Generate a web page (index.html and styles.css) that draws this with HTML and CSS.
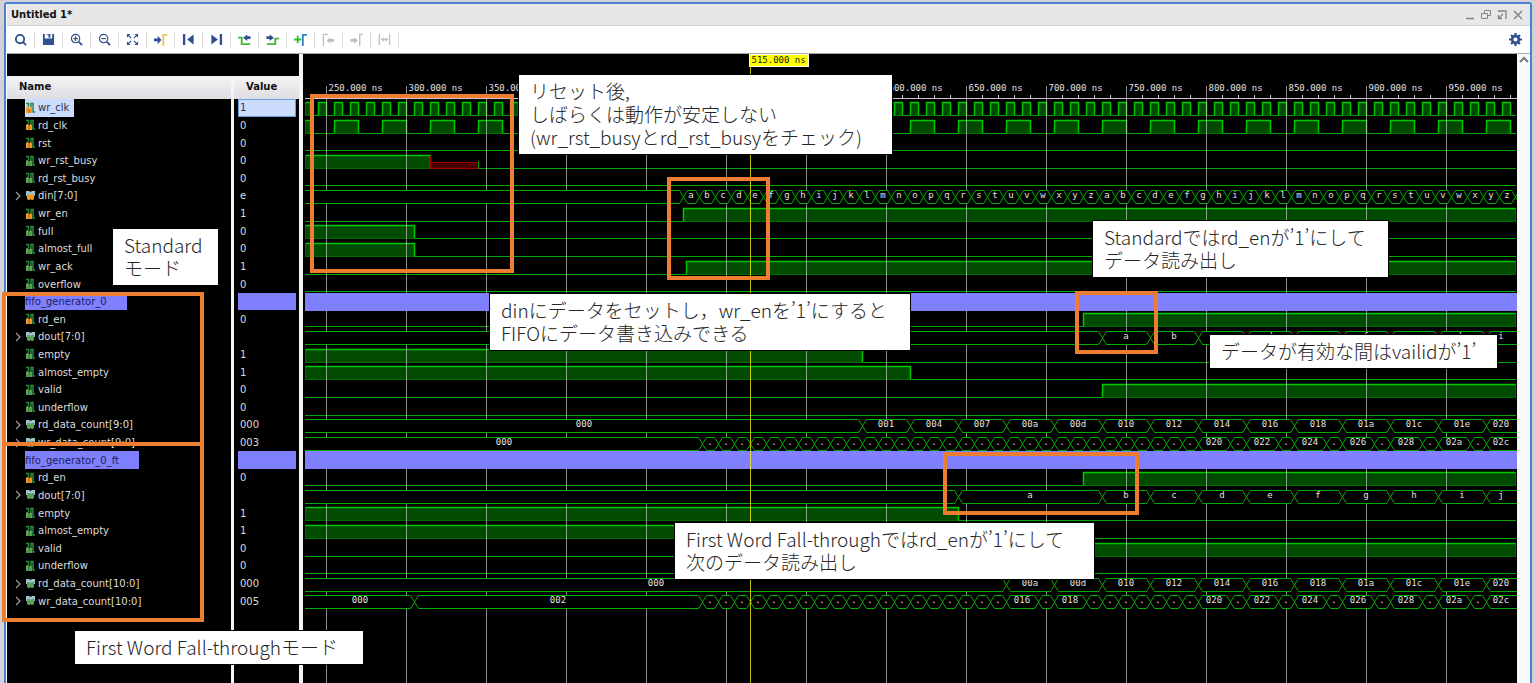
FILE: index.html
```html
<!DOCTYPE html>
<html lang="ja">
<head>
<meta charset="utf-8">
<meta name="viewport" content="width=device-width, initial-scale=1">
<title>Untitled 1*</title>
<link rel="stylesheet" href="styles.css">
</head>
<body>
<svg class="defs" width="0" height="0" aria-hidden="true">
  <symbol id="sig" viewBox="0 0 11 12">
    <path d="M1 1.500h2.500V5M6 5V1.500h2V10h2" fill="none" stroke="#2c8a3c" stroke-width="1.500"/>
    <path class="body" d="M1 6l1-1h1l1.200 1.500L5.500 5H6l1 1v5H1z"/>
    <path d="M4 7v4" stroke="#000" stroke-opacity=".35"/>
  </symbol>
  <symbol id="bus" viewBox="0 0 11 12">
    <path d="M1 1h3l1.500 1L7 1h3v5H1z" fill="#9cc3cf"/>
    <path class="body" d="M2 4h2l1.500 1L7 4h2v4.500L8 10H6.500l-1-1-1 1H3L2 8.500z"/>
  </symbol>
</svg>
<div class="page">
  <div class="window">
    <header class="titlebar">
      <h1>Untitled 1*</h1>
      <div class="controls">
        <button aria-label="Minimize"><svg width="12" height="12"><path d="M2 9.500h8" stroke-width="1.500"/></svg></button>
        <button aria-label="Restore"><svg width="12" height="12"><path d="M4.500 4V1.500h6v5H8M1.500 4.500h6v5h-6z"/></svg></button>
        <button aria-label="Float"><svg width="12" height="12"><path d="M2 2h8v8M2 10l5-5M2.500 6v3.500H6" stroke-width="1.300"/></svg></button>
        <button aria-label="Close"><svg width="12" height="12"><path d="M2 2l8 8M10 2l-8 8" stroke-width="1.500"/></svg></button>
      </div>
    </header>
    <nav class="toolbar" aria-label="Waveform tools">
      <button aria-label="Search"><svg viewBox="0 0 14 14"><circle cx="6.500" cy="6.500" r="4.500" class="n s"/><path d="M10 10l3 3" class="n s"/></svg></button>
      <button aria-label="Save"><svg viewBox="0 0 14 14"><path d="M1 1h2v5h8V1h2v12H1z" class="f"/><path d="M5 1h4v4H7V2H5z" class="f"/></svg></button>
      <button aria-label="Zoom in"><svg viewBox="0 0 14 14"><circle cx="6" cy="6" r="4.500" class="n"/><path d="M9.500 9.500l3.500 3.500" class="n s"/><path d="M3.500 6h5M6 3.500v5" class="n"/></svg></button>
      <button aria-label="Zoom out"><svg viewBox="0 0 14 14"><circle cx="6" cy="6" r="4.500" class="n"/><path d="M9.500 9.500l3.500 3.500" class="n s"/><path d="M3.500 6h5" class="n"/></svg></button>
      <button aria-label="Zoom fit"><svg viewBox="0 0 14 14"><path d="M1 1h4L1 5zM13 1H9l4 4zM1 13h4L1 9zM13 13H9l4-4z" class="f"/><path d="M2 2l3.500 3.500M12 2L8.500 5.500M2 12l3.500-3.500M12 12L8.500 8.500" class="n"/></svg></button>
      <button aria-label="Go to cursor"><svg viewBox="0 0 14 14"><path d="M0 6h4V3l4 4.500L4 12V9H0z" class="f"/><path d="M10 14V2h4" class="y"/></svg></button>
      <button aria-label="Go to start"><svg viewBox="0 0 14 14"><path d="M1 1h2.500v12H1zM12.500 1.500v11L5.500 7z" class="f"/></svg></button>
      <button aria-label="Go to end"><svg viewBox="0 0 14 14"><path d="M10.500 1H13v12h-2.500zM1.500 1.500v11l7-5.500z" class="f"/></svg></button>
      <button aria-label="Previous transition"><svg viewBox="0 0 14 14"><path d="M0 5h4v7h9" class="g"/><path d="M5.500 5L10 1.500V3.500h3.500v3H10v2z" class="f"/></svg></button>
      <button aria-label="Next transition"><svg viewBox="0 0 14 14"><path d="M1 12h9V6h4" class="g"/><path d="M8.500 5L4 1.500V3.500H.5v3H4v2z" class="f"/></svg></button>
      <button aria-label="Add marker"><svg viewBox="0 0 14 14"><path d="M0 7h8M4 3v8" class="g"/><path d="M9.500 14V2H14" class="b"/></svg></button>
      <button aria-label="Previous marker" disabled><svg viewBox="0 0 14 14"><path d="M1.500 14V1.500h5" class="d"/><path d="M5 8l4-3.500v2h4v3H9v2z" class="df"/></svg></button>
      <button aria-label="Next marker" disabled><svg viewBox="0 0 14 14"><path d="M10.500 14V1.500H14" class="d"/><path d="M8.500 8l-4-3.500v2h-4v3h4v2z" class="df"/></svg></button>
      <button aria-label="Swap markers" disabled><svg viewBox="0 0 14 14"><path d="M1.500 1v12M12.500 1v12M4 7h6" class="d"/><path d="M3 7l3-2.500v5zM11 7L8 4.500v5z" class="df"/></svg></button>
      <button class="gear" aria-label="Settings"><svg viewBox="0 0 14 14"><circle cx="7" cy="7" r="3.600" fill="none" stroke="#2f4f8f" stroke-width="2.800"/><path d="M7 0v3M7 11v3M0 7h3M11 7h3M2.200 2.200l2 2M9.800 9.800l2 2M2.200 11.800l2-2M9.800 4.200l2-2" stroke="#2f4f8f" stroke-width="2.400"/></svg></button>
    </nav>
    <main class="viewer">
      <section class="signals">
        <div class="pane names"><h2>Name</h2><ul id="names"></ul></div>
        <div class="pane values"><h2>Value</h2><ul id="values"></ul></div>
      </section>
      <section class="waves"><svg id="waves" role="img" aria-label="Waveforms"></svg></section>
      <div class="scroll"><button aria-label="Scroll up"><svg width="10" height="8"><path d="M1 6l4-4 4 4"/></svg></button></div>
    </main>
  </div>
  <div class="frame f1"></div><div class="frame f2"></div><div class="frame f3"></div>
  <div class="frame f4"></div><div class="frame f5"></div><div class="frame f6"></div>
  <p class="note n1">リセット後,<br>しばらくは動作が安定しない<br>(wr_rst_busyとrd_rst_busyをチェック)</p>
  <p class="note n2">Standard<br>モード</p>
  <p class="note n3">dinにデータをセットし，wr_enを’1’にすると<br>FIFOにデータ書き込みできる</p>
  <p class="note n4">Standardではrd_enが’1’にして<br>データ読み出し</p>
  <p class="note n5">データが有効な間はvailidが’1’</p>
  <p class="note n6">First Word Fall-throughではrd_enが’1’にして<br>次のデータ読み出し</p>
  <p class="note n7">First Word Fall-throughモード</p>
</div>
<script src="script.js"></script>
</body>
</html>
```
FILE: styles.css
```css
* { box-sizing: border-box; }
body { margin: 0; background: #d2d2d4; font-family: "DejaVu Sans", sans-serif; font-size: 10px; color: #111; }
button { border: 0; padding: 0; margin: 0; background: none; display: flex; align-items: center; justify-content: center; }
h1, h2, ul, p { margin: 0; padding: 0; }
.defs { position: absolute; }
.page { position: relative; min-height: 100vh; padding: 2px 4px 0; display: flex; flex-direction: column; overflow: hidden; }
.window { flex: 1; display: flex; flex-direction: column; border: 2px solid #4a80d4; border-bottom: 0; border-radius: 3px 3px 0 0; background: #fff; padding-left: 1px; }

.titlebar { height: 22px; padding: 0 4px; display: flex; align-items: center; justify-content: space-between; background: #e7e7e7; border-bottom: 1px solid #d0d0d0; }
.titlebar h1 { font-size: 10px; line-height: 12px; }
.controls { display: flex; gap: 4px; padding-right: 2px; }
.controls path { fill: none; stroke: #868686; }

.toolbar { height: 28px; display: flex; align-items: center; border-bottom: 1px solid #aaa; }
.toolbar button { width: 28px; height: 16px; border-right: 1px solid #dcdcdc; }
.toolbar svg { width: 13px; height: 13px; }
.toolbar .gear { margin: 0 1px 0 auto; border: 0; }
.f { fill: #2f4f8f; }
.n { fill: none; stroke: #2f4f8f; stroke-width: 1.3; }
.s { stroke-width: 2; }
.y, .g, .b, .d { fill: none; stroke-width: 2; }
.y { stroke: #ebc65a; }
.g { stroke: #3db93d; }
.b { stroke: #2e86c8; }
.d { stroke: #c0c0c0; stroke-width: 1.5; }
.df { fill: #c0c0c0; }

.viewer { flex: 1; display: flex; }
.signals { width: 296px; padding-top: 22px; background: #000; display: flex; border-right: 4px solid #f4f4f4; }
.names { flex: 1; border-right: 3px solid #f4f4f4; }
.values { width: 65px; }
.pane h2 { height: 23px; padding-left: 12px; font-size: 10px; line-height: 22px; background: linear-gradient(#f4f4f6, #dedee2); }
.pane ul { list-style: none; height: 511px; display: grid; grid-template-rows: repeat(29, 1fr); }
.names li { display: flex; align-items: center; padding-left: 5px; color: #dcdcdc; }
.chevron { width: 13px; height: 12px; }
.chevron path { fill: none; stroke: #9a9a9a; stroke-width: 1.2; }
.label { align-self: stretch; display: flex; align-items: center; gap: 2px; padding-right: 5px; }
.label svg { width: 11px; height: 12px; fill: #5aa356; }
.label .in { fill: #f09a28; }
.values li { display: flex; align-items: center; margin: 0 3px 0 4px; padding-left: 2px; color: #dcdcdc; }
.selected .label, .values .selected { background: #cbdcfd; color: #30304a; }
.values .selected { border: 1px solid #6aa0d8; padding-left: 1px; }
.group .label, .values .group { background: #8080ff; color: #20205c; }
.names .group .label { padding-right: 20px; }

.waves { flex: 1; min-width: 0; position: relative; background: #000; }
.waves svg { position: absolute; width: 100%; height: 100%; }
.waves text { font-family: "DejaVu Sans Mono", monospace; font-size: 9px; fill: #e0e0e0; }
.waves .mid { text-anchor: middle; }
.waves .stamp { fill: #222200; }
.grid { stroke: #c8c8c8; stroke-opacity: .7; }
.ruler { stroke: #c8c8c8; fill: none; }
.fill { fill: #004b00; stroke: #006c00; }
.high { fill: none; stroke: #00c800; stroke-width: 1.5; }
.low { fill: none; stroke: #00a800; }
.cell { fill: #000; stroke: #00b000; }
.unknown { fill: #4b0000; stroke: #a00000; }
.band { fill: #8080ff; }
.cursor { stroke: #ff0; stroke-opacity: .75; }
.tag { fill: #ff0; stroke: #fffff0; }
.scroll { width: 13px; background: #f9f9f9; }
.scroll button { width: 13px; height: 12px; }
.scroll path { fill: none; stroke: #777; stroke-width: 2; }

/* Annotations pinned over the waveform canvas */
.frame { position: absolute; border: 4px solid #ed7d31; }
.f1 { left: 310px; top: 94px; width: 204px; height: 179px; }
.f2 { left: 667px; top: 177px; width: 103px; height: 103px; }
.f3 { left: 1075px; top: 291px; width: 83px; height: 63px; }
.f4 { left: 943px; top: 452px; width: 196px; height: 63px; }
.f5 { left: 2px; top: 292px; width: 202px; height: 154px; }
.f6 { left: 2px; top: 442px; width: 202px; height: 180px; }
.note { position: absolute; padding: 4px 11px 6px; background: #fff; border: 1px solid #000; font-family: "Noto Sans CJK JP", sans-serif; font-weight: 300; font-size: 19px; line-height: 23px; color: #262626; white-space: nowrap; }
.n1 { left: 518px; top: 74px; width: 375px; }
.n2 { left: 112px; top: 228px; width: 107px; }
.n3 { left: 489px; top: 293px; width: 422px; }
.n4 { left: 1092px; top: 220px; width: 297px; }
.n5 { left: 1209px; top: 334px; width: 289px; }
.n6 { left: 674px; top: 522px; width: 421px; }
.n7 { left: 74px; top: 630px; width: 290px; }
```
FILE: script.js
```js
const group = name => ({ name, kind: 'group' });
const bit = (name, value, edges, input) => ({ name, value, kind: 'bit', edges, input });
const bus = (name, value, cells, input) => ({ name, value, kind: 'bus', cells, input });

// Cells are [start ns, label]; each one lasts until the next starts.
const every = (start, step, labels) => labels.map((l, i) => [start + i * step, l]);
const dots = (from, to) => every(from, 10, Array((to - from) / 10).fill('.'));
const letters = 'abcdefghijklmnopqrstuvwxyz';
const pairs = ['020', '022', '024', '026', '028', '02a'].flatMap((v, i) => [[795 + i * 30, v], [815 + i * 30, '.']]).concat([[975, '02c']]);
const upper = ['010', '012', '014', '016', '018', '01a', '01c', '01e', '020'];
const clock = (first, period, high) => {
  const out = [];
  for (let t = first; t < 1400; t += period) out.push([t, t + high]);
  return out;
};
const END = 1400;

const signals = [
  bit('wr_clk', '1', clock(235, 10, 5), true),
  bit('rd_clk', '0', clock(225, 30, 15), true),
  bit('rst', '0', [], true),
  bit('wr_rst_busy', '0', [[200, 315]]),
  bit('rd_rst_busy', '0', []),
  bus('din[7:0]', 'e', [[200, '']].concat(every(473.3, 10, [...letters + letters]), [[993.3, '']]), true),
  bit('wr_en', '1', [[473.3, END]], true),
  bit('full', '0', [[200, 305]]),
  bit('almost_full', '0', [[200, 305]]),
  bit('wr_ack', '1', [[475.3, END]]),
  bit('overflow', '0', []),
  group('fifo_generator_0'),
  bit('rd_en', '0', [[723, END]], true),
  bus('dout[7:0]', '', [[200, '']].concat(every(735, 30, [...'abcdefghi']))),
  bit('empty', '1', [[200, 585]]),
  bit('almost_empty', '1', [[200, 615]]),
  bit('valid', '0', [[735, END]]),
  bit('underflow', '0', []),
  bus('rd_data_count[9:0]', '000', [[200, '000']].concat(every(585, 30, ['001', '004', '007', '00a', '00d', ...upper]))),
  bus('wr_data_count[9:0]', '003', [[200, '000']].concat(dots(485, 795), pairs)),
  group('fifo_generator_0_ft'),
  bit('rd_en', '0', [[723, END]], true),
  bus('dout[7:0]', '', [[200, ''], [645, 'a']].concat(every(735, 30, [...'bcdefghij']))),
  bit('empty', '1', [[200, 645]]),
  bit('almost_empty', '1', [[200, 675]]),
  bit('valid', '0', [[645, END]]),
  bit('underflow', '0', []),
  bus('rd_data_count[10:0]', '000', [[200, '000']].concat(every(675, 30, ['00a', '00d', ...upper]))),
  bus('wr_data_count[10:0]', '005', [[200, '000'], [305, '002']].concat(dots(485, 675), [[675, '016'], [695, '.'], [705, '018']], dots(725, 795), pairs))
];

document.getElementById('names').innerHTML = signals.map((s, i) => {
  const cls = i === 0 ? 'selected' : s.kind === 'group' ? 'group' : '';
  const chevron = s.kind === 'bus'
    ? `<button class="chevron" aria-label="Expand ${s.name}"><svg width="12" height="10"><path d="M3 1l4 4-4 4"/></svg></button>`
    : '<span class="chevron"></span>';
  const icon = s.kind === 'group' ? '' : `<svg class="${s.input ? 'in' : ''}"><use href="#${s.kind === 'bus' ? 'bus' : 'sig'}"/></svg>`;
  return `<li class="${cls}">${chevron}<span class="label">${icon}${s.name}</span></li>`;
}).join('');
document.getElementById('values').innerHTML = signals.map((s, i) =>
  `<li class="${i === 0 ? 'selected' : s.kind === 'group' ? 'group' : ''}">${s.value || ''}</li>`).join('');

const canvas = document.getElementById('waves');
const TOP = 45, PITCH = 511 / 29, LEFT = 2;
const xAt = t => Math.round(23 + (t - 250) * 1.6) + 0.5;

function draw() {
  const right = canvas.clientWidth, bottom = canvas.clientHeight;
  const clamp = x => Math.max(LEFT + 0.5, Math.min(right - 1.5, x));
  const bits = [], buses = [], grid = [];
  signals.forEach((s, i) => {
    const y = Math.round(TOP + i * PITCH);
    const hi = y + 3.5, lo = y + 16.5, mid = y + 10;
    if (s.kind === 'group') {
      buses.push(`<rect class="band" x="${LEFT}" y="${y}" width="${right - LEFT}" height="18"/>`);
    } else if (s.kind === 'bit') {
      bits.push(`<path class="low" d="M${LEFT} ${lo}H${right - 1}"/>`);
      for (const [a, b] of s.edges) {
        const x1 = clamp(xAt(a)), x2 = clamp(xAt(b));
        if (x2 <= x1) continue;
        bits.push(`<rect class="fill" x="${x1}" y="${hi}" width="${x2 - x1}" height="13"/>`);
        const rise = xAt(a) > LEFT ? `M${x1} ${lo}V${hi}` : `M${x1} ${hi}`;
        bits.push(`<path class="high" d="${rise}H${x2}${xAt(b) < right ? `V${lo}` : ''}"/>`);
      }
      if (s.name === 'wr_rst_busy') {
        bits.push(`<rect class="unknown" x="${xAt(315)}" y="${hi + 7}" width="48" height="6"/>`);
        bits.push(`<path class="unknown" d="M${xAt(315)} ${hi}v7"/><path class="low" d="M${xAt(345)} ${lo}v-7"/>`);
      }
    } else {
      s.cells.forEach(([t, label], k) => {
        const last = k === s.cells.length - 1;
        const x1 = xAt(t), x2 = last ? right + 6 : xAt(s.cells[k + 1][0]);
        const start = k === 0 ? `M${LEFT} ${hi}` : `M${x1} ${mid}L${x1 + 4} ${hi}`;
        const close = k === 0 ? `H${LEFT}` : `H${x1 + 4}L${x1} ${mid}`;
        buses.push(`<path class="cell" d="${start}H${x2 - 4}L${x2} ${mid}L${x2 - 4} ${lo}${close}"/>`);
        if (label) {
          const centre = Math.floor((clamp(x1) + clamp(x2)) / 2);
          buses.push(`<text class="mid" x="${centre}" y="${y + 11}">${label}</text>`);
        }
      });
    }
  });
  const ruler = [`<path class="ruler" d="M${LEFT} 44.500H${right}"/>`];
  for (let t = 240; xAt(t) < right; t += 10) {
    const x = xAt(t);
    if (t % 50) ruler.push(`<path class="ruler" d="M${x} 41V44"/>`);
    else {
      grid.push(`<path class="grid" d="M${x} 32V${bottom}"/>`);
      ruler.push(`<text x="${x + 2}" y="37">${t}.000 ns</text>`);
    }
  }
  const c = xAt(515);
  canvas.innerHTML = bits.join('') + grid.join('') + buses.join('') + ruler.join('') +
    `<path class="cursor" d="M${c} 12V${bottom}"/><rect class="tag" x="${c - 1}" y="0.500" width="59" height="12"/>` +
    `<text class="stamp" x="${c + 1}" y="9">515.000 ns</text>`;
}
draw();
window.addEventListener('resize', draw);
```
